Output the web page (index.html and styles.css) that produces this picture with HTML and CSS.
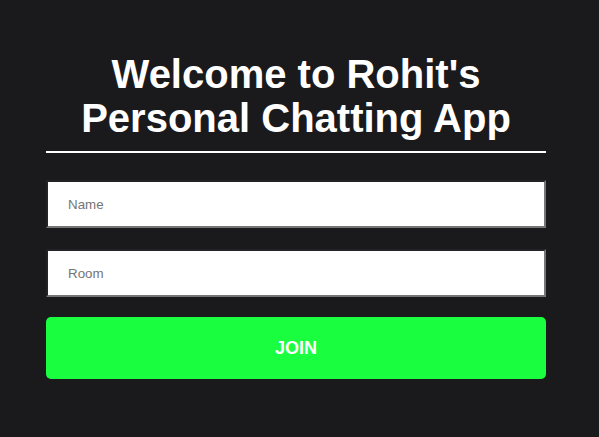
FILE: index.html
```html
<!DOCTYPE html>
<html>
<head>
<meta charset="utf-8">
<link rel="stylesheet" href="styles.css">
</head>
<body>
<div class="join">
  <h1 class="title">Welcome to Rohit's Personal Chatting App</h1>
  <hr class="rule">
  <input class="field" type="text" placeholder="Name">
  <input class="field" type="text" placeholder="Room">
  <button class="btn">JOIN</button>
</div>
</body>
</html>
```
FILE: styles.css
```css
html, body {
  margin: 0;
  padding: 0;
  background: #1a1a1d;
  height: 100%;
}
.join {
  width: 500px;
  margin-left: 46px;
  padding-top: 52px;
  display: flex;
  flex-direction: column;
}
.title {
  margin: 0 0 11px;
  font-family: "Liberation Sans", Arial, sans-serif;
  font-weight: bold;
  font-size: 40px;
  line-height: 44px;
  color: #fff;
  text-align: center;
  padding: 0 30px;
}
.rule {
  margin: 0 0 27px;
  border: 0;
  height: 2px;
  background: #fff;
}
.field {
  box-sizing: border-box;
  height: 48px;
  width: 500px;
  margin: 0 0 21px;
  padding: 0 20px;
  border: 2px solid #767676;
  border-top-color: #232326;
  border-left-color: #232326;
  background: #fff;
  font-family: "Liberation Sans", Arial, sans-serif;
  font-size: 13.33px;
  outline: none;
}
.field::placeholder {
  color: #757575;
}
.btn {
  height: 62px;
  margin-top: -1px;
  border: 0;
  border-radius: 5px;
  background: #19ff3f;
  color: #fff;
  font-family: "Liberation Sans", Arial, sans-serif;
  font-weight: bold;
  font-size: 18px;
}
```
